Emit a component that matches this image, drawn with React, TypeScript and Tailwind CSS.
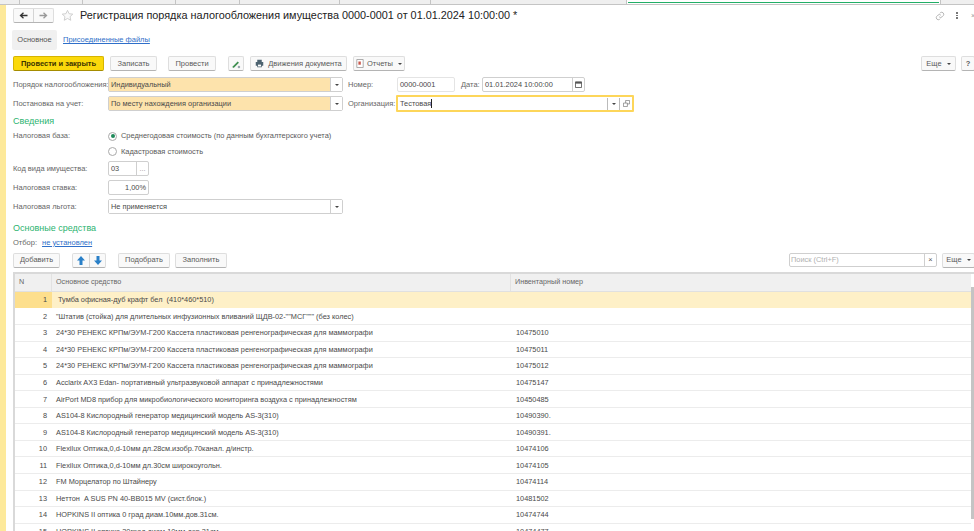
import React from "react";

const rows: [string, string, string][] = [
  ["1", "Тумба офисная-дуб крафт бел  (410*460*510)", ""],
  ["2", "\"Штатив (стойка) для длительных инфузионных вливаний ЩДВ-02-\"\"МСГ\"\"\" (без колес)", ""],
  ["3", "24*30 РЕНЕКС КРПм/ЭУМ-Г200 Кассета пластиковая ренгенографическая для маммографи", "10475010"],
  ["4", "24*30 РЕНЕКС КРПм/ЭУМ-Г200 Кассета пластиковая ренгенографическая для маммографи", "10475011"],
  ["5", "24*30 РЕНЕКС КРПм/ЭУМ-Г200 Кассета пластиковая ренгенографическая для маммографи", "10475012"],
  ["6", "Acclarix AX3 Edan- портативный ультразвуковой аппарат с принадлежностями", "10475147"],
  ["7", "AirPort MD8 прибор для микробиологического мониторинга воздуха с принадлежностям", "10450485"],
  ["8", "AS104-8 Кислородный генератор медицинский модель AS-3(310)", "10490390."],
  ["9", "AS104-8 Кислородный генератор медицинский модель AS-3(310)", "10490391."],
  ["10", "Flexilux Оптика,0,d-10мм дл.28см.изобр.70канал. д/инстр.", "10474106"],
  ["11", "Flexilux Оптика,0,d-10мм дл.30см широкоугольн.", "10474105"],
  ["12", "FM Морцелатор по Штайнеру", "10474114"],
  ["13", "Неттон  A SUS PN 40-BB015 MV (сист.блок.)", "10481502"],
  ["14", "HOPKINS II оптика 0 град диам.10мм.дов.31см.", "10474744"],
  ["15", "HOPKINS II оптика 30град диам.10мм.дов.31см.", "10474477"],
];

const btn =
  "h-[15px] flex items-center justify-center shrink-0 bg-[#f9f9f9] border border-[#dedede] border-b-[#b4b4b4] rounded-[2px] text-[#5a5a5a] text-[7.5px] whitespace-pre";
const field =
  "h-[15px] flex items-center shrink-0 bg-white border border-[#cfcfcf] rounded-[2px] text-[#4a4a4a] text-[7.4px]";

function Caret() {
  return <span className="w-0 h-0 border-x-[2px] border-x-transparent border-t-[2px] border-t-[#444]" />;
}

function Select({ text, filled, w }: { text: string; filled?: boolean; w: string }) {
  return (
    <div className={`${field} ${w} ${filled ? "bg-[#fde3ac]" : ""}`}>
      <span className={`flex-1 h-full flex items-center pl-[2px] ${filled ? "bg-[#fde3ac]" : "bg-white"}`}>{text}</span>
      <span className="w-[12px] h-full flex items-center justify-center bg-white border-l border-[#cfcfcf]">
        <Caret />
      </span>
    </div>
  );
}

function FormLabel({ children, w }: { children: React.ReactNode; w: string }) {
  return <span className={`${w} shrink-0 text-[7.5px] text-[#666] whitespace-nowrap`}>{children}</span>;
}

function Radio({ on }: { on?: boolean }) {
  return (
    <span className="w-[9px] h-[9px] rounded-full border border-[#a9a9a9] bg-white flex items-center justify-center shrink-0">
      {on && <span className="w-[4px] h-[4px] rounded-full bg-[#1f8a5a]" />}
    </span>
  );
}

export default function App() {
  return (
    <div
      className="w-[974px] h-[531px] overflow-hidden bg-white flex flex-col"
      style={{ fontFamily: '"Liberation Sans", Arial, sans-serif' }}
    >
      {/* Window tabs */}
      <div className="h-[5px] shrink-0 flex bg-[#efefef] border-b border-[#c4c4c4]">
        {[20, 63, 93, 64, 100, 91, 196].map((w, i) => (
          <div key={i} style={{ width: w }} className="border-r border-[#c4c4c4]" />
        ))}
        <div className="w-[314px] bg-white border-r border-[#c4c4c4] pl-[1px]">
          <div className="h-[3px] border-b-[1px] border-[#22ae66] w-[311px]" />
        </div>
      </div>

      <div className="flex-1 flex min-h-0">
        <div className="w-[6px] shrink-0 bg-[#fde99a]" />
        <div className="flex-1 min-w-0 flex flex-col">
          {/* Title */}
          <div className="h-[19px] mt-[1px] flex items-center shrink-0">
            <div className={`${btn} ml-[7px] w-[41px] h-[14px] !justify-start`}>
              <span className="w-[20px] flex justify-center border-r border-[#d4d4d4] h-full items-center">
                <svg width="9" height="7" viewBox="0 0 9 7"><path d="M8.5 3.500H2M4.500 .8 1.500 3.500l3 2.700" fill="none" stroke="#333" strokeWidth="1.3" /></svg>
              </span>
              <span className="w-[19px] flex justify-center">
                <svg width="9" height="7" viewBox="0 0 9 7"><path d="M.5 3.500H7M4.500 .8l3 2.700-3 2.700" fill="none" stroke="#999" strokeWidth="1.3" /></svg>
              </span>
            </div>
            <svg className="ml-[7px]" width="13" height="13" viewBox="0 0 24 24">
              <path d="M12 2.500l2.900 6.200 6.800.8-5 4.600 1.300 6.700L12 17.500l-6 3.300 1.300-6.700-5-4.600 6.800-.8z" fill="#fafafa" stroke="#c9c9c9" strokeWidth="1.6" />
            </svg>
            <span className="ml-[6px] text-[10.85px] text-[#222] whitespace-pre">
              Регистрация порядка налогообложения имущества 0000-0001 от 01.01.2024 10:00:00 *
            </span>
            <div className="ml-auto flex items-center">
              <svg width="10" height="10" viewBox="0 0 24 24" fill="none" stroke="#a8a8a8" strokeWidth="2">
                <path d="M10 14a5 5 0 0 0 7 0l3-3a5 5 0 0 0-7-7l-1.500 1.500" />
                <path d="M14 10a5 5 0 0 0-7 0l-3 3a5 5 0 0 0 7 7l1.500-1.500" />
              </svg>
              <span className="ml-[11px] flex flex-col gap-[1px]">
                <span className="w-[2px] h-[1.5px] bg-[#777]" />
                <span className="w-[2px] h-[1.5px] bg-[#777]" />
                <span className="w-[2px] h-[1.5px] bg-[#777]" />
              </span>
              <span className="ml-[13px] w-[3px] text-[7px] leading-none text-[#999] overflow-hidden">×</span>
            </div>
          </div>

          {/* Tabs */}
          <div className="h-[20px] mt-[5px] flex items-center shrink-0 text-[7.5px]">
            <div className="ml-[6px] w-[45px] h-full flex items-center justify-center bg-[#f0f0f0] rounded-[2px] text-[#555]">Основное</div>
            <span className="ml-[6px] text-[#2f6fc9] underline">Присоединенные файлы</span>
          </div>

          {/* Command bar */}
          <div className="h-[16px] mt-[6px] flex shrink-0">
            <div className={`${btn} ml-[7px] w-[91px] !bg-[#fbd90b] !border-[#d6b400] !border-b-[#a58c00] !text-[#3c3300] font-bold`}>Провести и закрыть</div>
            <div className={`${btn} ml-[6px] w-[47px]`}>Записать</div>
            <div className={`${btn} ml-[11px] w-[48px]`}>Провести</div>
            <div className={`${btn} ml-[12px] w-[16px]`}>
              <svg width="10" height="10" viewBox="0 0 12 12">
                <path d="M2 9 8 3l1.500 1.500-6 6H2z" fill="#3e8f4f" />
                <circle cx="9.500" cy="9.500" r="1.500" fill="#9aa7ad" />
              </svg>
            </div>
            <div className={`${btn} ml-[6px] w-[97px] gap-[4px]`}>
              <svg width="9" height="9" viewBox="0 0 12 12">
                <path d="M3 1h6v3H3zM1 4h10v5H9v2H3V9H1z" fill="#4d6370" />
                <path d="M4 7.500h4V10H4z" fill="#fff" />
              </svg>
              Движения документа
            </div>
            <div className={`${btn} ml-[6px] w-[52px] gap-[3px]`}>
              <svg width="8" height="9" viewBox="0 0 10 11">
                <path d="M1 .5h8v10H1z" fill="#fff" stroke="#999" />
                <path d="M3 3h3v4H3z" fill="#c9564a" />
              </svg>
              Отчеты <Caret />
            </div>
            <div className={`${btn} ml-auto w-[35px] gap-[3px]`}>Еще <Caret /></div>
            <div className={`${btn} ml-[5px] mr-[-1px] w-[14px] font-bold`}>?</div>
          </div>

          {/* Row 1 */}
          <div className="h-[15px] mt-[5px] flex items-center shrink-0 pl-[7px]">
            <FormLabel w="w-[95px]">Порядок налогообложения:</FormLabel>
            <Select w="w-[235px]" text="Индивидуальный" filled />
            <span className="ml-[5px] w-[49px] text-[7.5px] text-[#666]">Номер:</span>
            <div className={`${field} w-[58px] pl-[2px] !border-[#e4e4e4]`}>0000-0001</div>
            <span className="ml-[6px] w-[21px] text-[7.5px] text-[#666]">Дата:</span>
            <div className={`${field} w-[103px] pl-[2px]`}>
              <span className="flex-1">01.01.2024 10:00:00</span>
              <span className="w-[12px] h-full border-l border-[#cfcfcf] flex items-center justify-center">
                <svg width="7" height="7" viewBox="0 0 8 8"><path d="M.5 1h7v6.500h-7z" fill="#fff" stroke="#555" /><path d="M.5 1h7v2h-7z" fill="#555" /></svg>
              </span>
            </div>
          </div>

          {/* Row 2 */}
          <div className="h-[17px] mt-[3px] flex items-center shrink-0 pl-[7px]">
            <FormLabel w="w-[95px]">Постановка на учет:</FormLabel>
            <Select w="w-[235px]" text="По месту нахождения организации" filled />
            <span className="ml-[5px] w-[48px] text-[7.5px] text-[#666]">Организация:</span>
            <div className="h-[17px] w-[238px] shrink-0 flex items-center bg-white border-2 border-[#fdd65a] text-[7.4px] text-[#4a4a4a] rounded-[1px]">
              <span className="flex-1 pl-[2px] flex items-center">Тестовая<span className="w-px h-[9px] bg-[#222]" /></span>
              <span className="w-[12px] h-[12px] border-l border-[#bbb] flex items-center justify-center"><Caret /></span>
              <span className="w-[13px] h-[12px] border-l border-[#bbb] flex items-center justify-center">
                <svg width="7" height="7" viewBox="0 0 8 8" fill="#fff" stroke="#777" strokeWidth=".8"><path d="M3 .5h4.500v4H3z" /><path d="M.5 3.500H5v4H.5z" /></svg>
              </span>
            </div>
          </div>

          {/* Сведения */}
          <div className="mt-[3px] h-[14px] pl-[7px] flex items-center text-[9px] text-[#2cb36f] shrink-0">Сведения</div>

          <div className="h-[14px] flex items-center pl-[7px] shrink-0">
            <FormLabel w="w-[95px]">Налоговая база:</FormLabel>
            <Radio on />
            <span className="ml-[4px] text-[7.45px] text-[#5a5a5a] whitespace-pre">Среднегодовая стоимость (по данным бухгалтерского учета)</span>
          </div>
          <div className="h-[15px] mt-[1px] flex items-center pl-[102px] shrink-0">
            <Radio />
            <span className="ml-[4px] text-[7.45px] text-[#5a5a5a]">Кадастровая стоимость</span>
          </div>

          <div className="h-[15px] mt-[2px] flex items-center pl-[7px] shrink-0">
            <FormLabel w="w-[95px]">Код вида имущества:</FormLabel>
            <div className={`${field} w-[41px] pl-[2px]`}>
              <span className="flex-1">03</span>
              <span className="w-[12px] h-full border-l border-[#cfcfcf] flex items-center justify-center text-[#999] leading-none">...</span>
            </div>
          </div>

          <div className="h-[15px] mt-[4px] flex items-center pl-[7px] shrink-0">
            <FormLabel w="w-[95px]">Налоговая ставка:</FormLabel>
            <div className={`${field} w-[41px] justify-end pr-[2px]`}>1,00%</div>
          </div>

          <div className="h-[15px] mt-[4px] flex items-center pl-[7px] shrink-0">
            <FormLabel w="w-[95px]">Налоговая льгота:</FormLabel>
            <Select w="w-[235px]" text="Не применяется" />
          </div>

          {/* Основные средства */}
          <div className="mt-[8px] h-[14px] pl-[7px] flex items-center text-[9px] text-[#2cb36f] shrink-0">Основные средства</div>
          <div className="h-[13px] pl-[7px] flex items-center text-[7.5px] shrink-0">
            <span className="text-[#666]">Отбор:</span>
            <span className="ml-[5px] text-[#2f6fc9] underline">не установлен</span>
          </div>

          {/* Table toolbar */}
          <div className="h-[16px] mt-[3px] flex shrink-0 items-center">
            <div className={`${btn} ml-[7px] w-[47px]`}>Добавить</div>
            <div className={`${btn} ml-[12px] w-[34px] !justify-start`}>
              <span className="w-[17px] h-full flex items-center justify-center border-r border-[#d4d4d4]">
                <svg width="8" height="9" viewBox="0 0 8 9"><path d="M4 0l4 4.500H5.500V9h-3V4.500H0z" fill="#2a80c8" /></svg>
              </span>
              <span className="w-[15px] flex items-center justify-center">
                <svg width="8" height="9" viewBox="0 0 8 9"><path d="M4 9l4-4.500H5.500V0h-3v4.500H0z" fill="#2a80c8" /></svg>
              </span>
            </div>
            <div className={`${btn} ml-[12px] w-[52px]`}>Подобрать</div>
            <div className={`${btn} ml-[5px] w-[52px]`}>Заполнить</div>
            <div className={`${field} ml-auto w-[148px] pl-[1px] !text-[#b0b0b0] !h-[14px]`}>
              <span className="flex-1">Поиск (Ctrl+F)</span>
              <span className="w-[12px] h-full border-l border-[#cfcfcf] flex items-center justify-center text-[#555] leading-none">×</span>
            </div>
            <div className={`${btn} ml-[5px] mr-[-1px] w-[33px] gap-[3px]`}>Еще <Caret /></div>
          </div>

          {/* Table */}
          <div className="flex-1 min-h-0 mt-[4px] ml-[7px] flex overflow-hidden border-t-2 border-l-2 border-[#d9d9d9]">
            <div className="flex-1 min-w-0 flex flex-col">
              <div className="h-[18px] shrink-0 flex bg-[#f0f0f0] text-[7.2px] text-[#666] border-b border-[#e0e0e0]">
                <div className="w-[37px] pl-[4px] flex items-center border-r border-[#e2e2e2]">N</div>
                <div className="w-[459px] pl-[4px] flex items-center border-r border-[#e2e2e2]">Основное средство</div>
                <div className="flex-1 pl-[4px] flex items-center">Инвентарный номер</div>
              </div>
              {rows.map(([n, name, inv], i) => (
                <div key={n} className={`h-[16.55px] shrink-0 flex text-[7.35px] text-[#4a4a4a] border-b border-[#ececec] ${i === 0 ? "bg-[#fef0c7] border-[#fff]" : ""}`}>
                  <div className={`w-[37px] shrink-0 flex items-center justify-end pr-[5px] ${i === 0 ? "bg-[#fddf8d]" : ""}`}>{n}</div>
                  <div className={`w-[459px] shrink-0 flex items-center whitespace-pre ${i === 0 ? "pl-[6px]" : "pl-[4px]"}`}>{name}</div>
                  <div className="flex-1 pl-[5px] flex items-center">{inv}</div>
                </div>
              ))}
            </div>
            <div className="w-[3px] shrink-0 pt-[13px]">
              <div className="h-[232px] bg-[#c4c4c4]" />
            </div>
          </div>
        </div>
      </div>
    </div>
  );
}
